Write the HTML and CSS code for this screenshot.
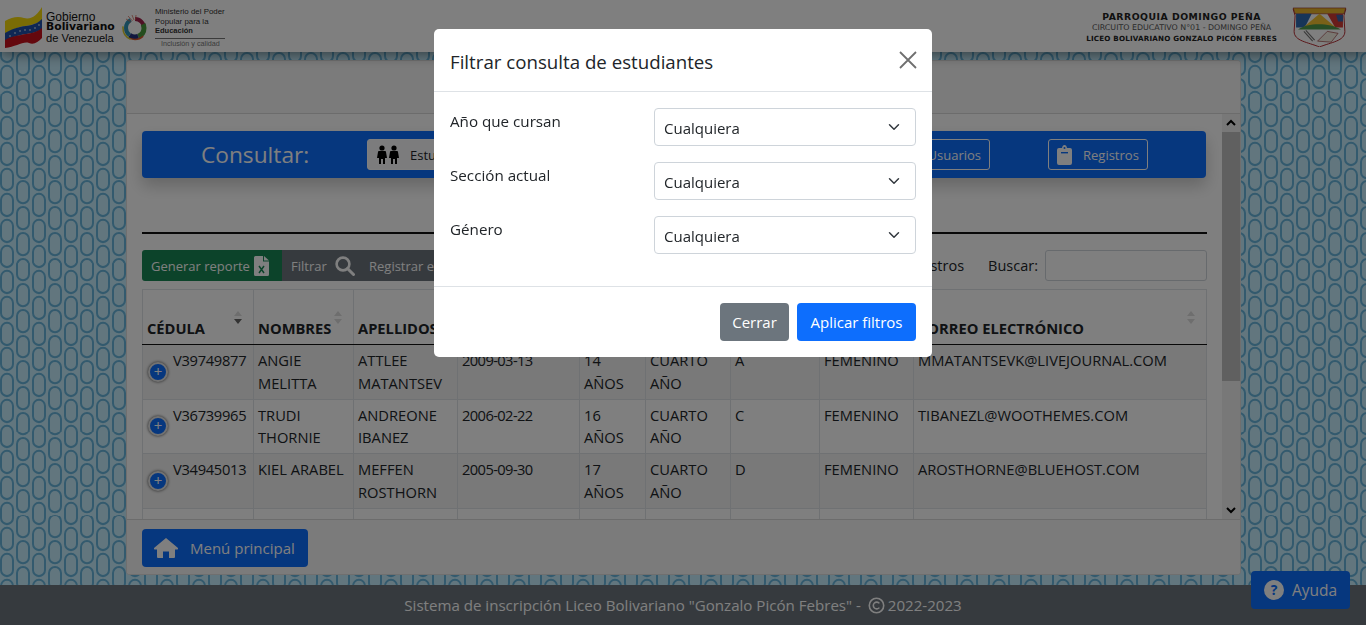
FILE: index.html
```html
<!DOCTYPE html>
<html lang="es">
<head>
    <meta charset="UTF-8">
    <meta name="viewport" content="width=device-width, initial-scale=1.0">
    <title>Consultar estudiantes</title>
    <link rel="stylesheet" href="styles.css">
</head>
<body>

    <header class="top-header">
        <div class="brand">
            <svg class="flag" viewBox="0 0 40 42" width="40" height="42">
                <path d="M1 15 C8 11 14 10 20 12 C28 14 34 8 38 1 L38 14 C30 20 24 19 16 21 C10 23 5 25 1 28 Z" fill="#f5d90a"/>
                <path d="M1 27 C6 24 11 22 16 21 C24 19 31 20 38 13 L38 23 C31 28 24 27 17 29 C10 31 5 32 1 35 Z" fill="#1f4fa8"/>
                <path d="M1 34 C6 31 11 30 17 29 C24 27 31 28 38 22 L38 32 C34 36 30 39 25 37 C19 35 12 41 1 42 Z" fill="#c8101c"/>
                <g fill="#fff">
                    <circle cx="6" cy="30" r=".8"/><circle cx="11" cy="27" r=".8"/><circle cx="16" cy="25" r=".8"/>
                    <circle cx="21" cy="24" r=".8"/><circle cx="26" cy="24" r=".8"/><circle cx="31" cy="22" r=".8"/><circle cx="35" cy="19" r=".8"/>
                </g>
            </svg>
            <div class="brand-gob">
                <span>Gobierno</span>
                <strong>Bolivariano</strong>
                <span class="brand-gob-last">de Venezuela</span>
            </div>
            <svg class="ring" viewBox="0 0 28 28" width="28" height="28">
                <g fill="none" transform="rotate(-90 14 14)">
                    <circle cx="14" cy="14" r="9" stroke="#a0224a" stroke-width="4" stroke-dasharray="14 60" pathLength="56.5"/>
                    <circle cx="14" cy="14" r="9" stroke="#4a9a3c" stroke-width="5" stroke-dasharray="15 60" stroke-dashoffset="-10" pathLength="56.5"/>
                    <circle cx="14" cy="14" r="9" stroke="#24307f" stroke-width="5" stroke-dasharray="9 60" stroke-dashoffset="-25" pathLength="56.5"/>
                    <circle cx="14" cy="14" r="11.5" stroke="#d8572a" stroke-width="1.5" stroke-dasharray="14 80" stroke-dashoffset="-27" pathLength="72"/>
                    <circle cx="14" cy="14" r="9" stroke="#2f93b5" stroke-width="4" stroke-dasharray="18 60" stroke-dashoffset="-34" pathLength="56.5"/>
                    <circle cx="14" cy="14" r="12" stroke="#d6c92c" stroke-width="1.6" stroke-dasharray="16 80" stroke-dashoffset="-42" pathLength="75"/>
                </g>
                <path d="M13 6 L11 1 M14.5 6 L15 1 M11.5 7 L7 2 M10 8 L5 5" stroke="#d0604a" stroke-width=".7"/>
            </svg>
            <div class="brand-min">
                <span>Ministerio del Poder</span>
                <span>Popular para la</span>
                <strong>Educación</strong>
                <em>Inclusión y calidad</em>
            </div>
        </div>
        <div class="school">
            <div class="school-text">
                <strong class="school-name">PARROQUIA DOMINGO PEÑA</strong>
                <span class="school-circuit">CIRCUITO EDUCATIVO N°01 - DOMINGO PEÑA</span>
                <strong class="school-liceo">LICEO BOLIVARIANO GONZALO PICÓN FEBRES</strong>
            </div>
            <svg class="crest" viewBox="0 0 56 42" width="55" height="41">
                <path d="M3 10 L1 3 L55 3 L53 10 L54 26 C54 36 40 37 28 42 C16 37 2 36 2 26 Z" fill="#fff" stroke="#b3262c" stroke-width="1"/>
                <path d="M1 2 H55 L53 8 H3 Z" fill="#e8b52a" stroke="#8a1f1f" stroke-width=".6"/>
                <path d="M4 8 H20 L13 22 H4 Z" fill="#2f6bb0"/>
                <path d="M36 8 H52 V22 H44 Z" fill="#d23a34"/>
                <path d="M45 9 L52 9 L52 16 L47 16 Z" fill="#3a62a8"/>
                <path d="M10 23 L28 8 L46 23 Z" fill="#f2c230"/>
                <path d="M6 24 C16 17 38 17 50 24 Z" fill="#4e9a4a"/>
                <path d="M12 26 L21 36 M14 25 L23 35" stroke="#777" stroke-width="1.2"/>
                <path d="M26 36 L36 26 L47 28 L40 37 Z" fill="#f4f0e4" stroke="#8a1f1f" stroke-width=".6"/>
            </svg>
        </div>
    </header>

    <main class="page">
        <section class="card">
            <div class="card-head"></div>
            <div class="card-main">
                <div class="card-scroll">
                    <div class="query-bar">
                        <span class="query-title">Consultar:</span>
                        <nav class="query-nav">
                            <a class="nav-btn nav-btn-active nav-btn-first">
                                <svg viewBox="0 0 24 20" width="24" height="20">
                                    <g fill="#000">
                                        <circle cx="6" cy="3" r="2.6"/><path d="M2 7 Q2 6 3 6 H9 Q10 6 10 7 L11 13 H9 V19 H7 V14 H5 V19 H3 V13 H1 Z"/>
                                        <circle cx="18" cy="3" r="2.6"/><path d="M14 7 Q14 6 15 6 H21 Q22 6 22 7 L23 13 H21 V19 H19 V14 H17 V19 H15 V13 H13 Z"/>
                                    </g>
                                </svg>
                                <span>Estudiantes</span>
                            </a>
                            <a class="nav-btn nav-btn-hidden-a"><span>Representantes</span></a>
                            <a class="nav-btn nav-btn-hidden-b"><span>Personal</span></a>
                            <a class="nav-btn nav-btn-users"><span>Usuarios</span></a>
                            <a class="nav-btn nav-btn-log">
                                <svg viewBox="0 0 15 20" width="15" height="20">
                                    <path fill="#fff" d="M2 3 H5 Q5.5 0 7.5 0 Q9.500 0 10 3 H13 Q15 3 15 5 V18 Q15 20 13 20 H2 Q0 20 0 18 V5 Q0 3 2 3 Z"/>
                                    <circle cx="7.500" cy="3" r="1" fill="#0d6efd"/>
                                    <rect x="4" y="7" width="7" height="1.400" fill="#0d6efd"/>
                                </svg>
                                <span>Registros</span>
                            </a>
                        </nav>
                    </div>

                    <hr class="divider">

                    <div class="table-tools">
                        <div class="btn-group">
                            <a class="tool-btn tool-green">
                                <span>Generar reporte</span>
                                <svg viewBox="0 0 15 20" width="15" height="20">
                                    <path fill="#fff" d="M1.500 0 H9 V5.500 H15 V18.500 Q15 20 13.500 20 H1.500 Q0 20 0 18.500 V1.500 Q0 0 1.500 0 Z M10 0 L15 4.500 H10 Z"/>
                                    <path d="M5 10 L10 17 M10 10 L5 17" stroke="#198754" stroke-width="1.500"/>
                                </svg>
                            </a>
                            <a class="tool-btn tool-gray">
                                <span>Filtrar</span>
                                <svg viewBox="0 0 20 20" width="20" height="20">
                                    <circle cx="8" cy="8" r="6.400" fill="none" stroke="#fff" stroke-width="2.600"/>
                                    <path d="M12.500 12.500 L18.500 18.500" stroke="#fff" stroke-width="3" stroke-linecap="round"/>
                                </svg>
                            </a>
                            <a class="tool-btn tool-gray tool-register"><span>Registrar estudiante</span></a>
                        </div>
                        <div class="tools-right">
                            <span>Mostrar 10 registros</span>
                            <label class="search-label">Buscar:</label>
                            <input class="search-input" type="search">
                        </div>
                    </div>

                    <table class="students">
                        <colgroup>
                            <col class="col-id"><col class="col-name"><col class="col-last"><col class="col-birth"><col class="col-age">
                            <col class="col-year"><col class="col-section"><col class="col-gender"><col>
                        </colgroup>
                        <thead>
                            <tr>
                                <th class="sorted">CÉDULA</th>
                                <th>NOMBRES</th>
                                <th>APELLIDOS</th>
                                <th>FECHA DE NACIMIENTO</th>
                                <th>EDAD</th>
                                <th>AÑO</th>
                                <th>SECCIÓN</th>
                                <th>GÉNERO</th>
                                <th>CORREO ELECTRÓNICO</th>
                            </tr>
                        </thead>
                        <tbody>
                            <tr>
                                <td class="id-cell"><span class="expand">+</span>V39749877</td>
                                <td>ANGIE MELITTA</td>
                                <td>ATTLEE MATANTSEV</td>
                                <td class="date-cell">2009-03-13</td>
                                <td>14 AÑOS</td>
                                <td>CUARTO AÑO</td>
                                <td>A</td>
                                <td>FEMENINO</td>
                                <td>MMATANTSEVK@LIVEJOURNAL.COM</td>
                            </tr>
                            <tr>
                                <td class="id-cell"><span class="expand">+</span>V36739965</td>
                                <td>TRUDI THORNIE</td>
                                <td>ANDREONE IBANEZ</td>
                                <td class="date-cell">2006-02-22</td>
                                <td>16 AÑOS</td>
                                <td>CUARTO AÑO</td>
                                <td>C</td>
                                <td>FEMENINO</td>
                                <td>TIBANEZL@WOOTHEMES.COM</td>
                            </tr>
                            <tr>
                                <td class="id-cell"><span class="expand">+</span>V34945013</td>
                                <td>KIEL ARABEL</td>
                                <td>MEFFEN ROSTHORN</td>
                                <td class="date-cell">2005-09-30</td>
                                <td>17 AÑOS</td>
                                <td>CUARTO AÑO</td>
                                <td>D</td>
                                <td>FEMENINO</td>
                                <td>AROSTHORNE@BLUEHOST.COM</td>
                            </tr>
                            <tr>
                                <td class="id-cell"><span class="expand">+</span>V14806536</td>
                                <td>WALDEMAR PAUL</td>
                                <td>CRIVEY PAULA</td>
                                <td class="date-cell">2004-07-30</td>
                                <td>18 AÑOS</td>
                                <td>CUARTO AÑO</td>
                                <td>E</td>
                                <td>MASCULINO</td>
                                <td>IPAULMAIE@TUEBBA.COM</td>
                            </tr>
                        </tbody>
                    </table>
                </div>
                <div class="fake-scrollbar">
                    <svg class="scroll-arrow" viewBox="0 0 18 18" width="18" height="18"><path d="M5 11 L9 7 L13 11" fill="none" stroke="#000" stroke-width="2"/></svg>
                    <div class="scroll-track"><div class="scroll-thumb"></div></div>
                    <svg class="scroll-arrow" viewBox="0 0 18 18" width="18" height="18"><path d="M5 7 L9 11 L13 7" fill="none" stroke="#000" stroke-width="2"/></svg>
                </div>
            </div>
            <div class="card-foot">
                <a class="home-btn">
                    <svg viewBox="0 0 24 20" width="24" height="20">
                        <path fill="#fff" d="M12 0 L24 10 Q24.500 11 23.500 11.500 L21 11.500 V19 Q21 20 20 20 H15 V13.500 H9 V20 H4 Q3 20 3 19 V11.500 H.5 Q-.5 11 0 10 Z"/>
                    </svg>
                    <span>Menú principal</span>
                </a>
            </div>
        </section>
    </main>

    <footer class="bottom-footer">
        <span>Sistema de inscripción Liceo Bolivariano "Gonzalo Picón Febres" - </span>
        <svg viewBox="0 0 16 16" width="17" height="17">
            <circle cx="8" cy="8" r="6.800" fill="none" stroke="#fff" stroke-width="1.500"/>
            <path d="M10.700 6 A3.200 3.200 0 1 0 10.700 10" fill="none" stroke="#fff" stroke-width="1.500"/>
        </svg>
        <span>2022-2023</span>
    </footer>

    <a class="help-btn"><span class="help-icon">?</span><span>Ayuda</span></a>

    <div class="backdrop"></div>

    <div class="modal">
        <div class="modal-head">
            <h5 class="modal-title">Filtrar consulta de estudiantes</h5>
            <svg class="modal-close" viewBox="0 0 18 18" width="18" height="18">
                <path d="M1 1 L17 17 M17 1 L1 17" stroke="#6f6f6f" stroke-width="1.800"/>
            </svg>
        </div>
        <div class="modal-body">
            <div class="form-row">
                <label class="form-label">Año que cursan</label>
                <select class="form-select"><option>Cualquiera</option></select>
            </div>
            <div class="form-row">
                <label class="form-label">Sección actual</label>
                <select class="form-select"><option>Cualquiera</option></select>
            </div>
            <div class="form-row">
                <label class="form-label">Género</label>
                <select class="form-select"><option>Cualquiera</option></select>
            </div>
        </div>
        <div class="modal-foot">
            <button class="btn btn-gray">Cerrar</button>
            <button class="btn btn-blue">Aplicar filtros</button>
        </div>
    </div>

</body>
</html>
```

FILE: styles.css
```css
* {
    box-sizing: border-box;
}

body {
    font-family: "Open Sans", "Noto Sans", sans-serif;
    margin: 0;
    height: 100vh;
    overflow: hidden;
    display: flex;
    flex-direction: column;
    color: #212529;
    background: #fff;
}

/* top header */
.top-header {
    height: 52px;
    flex: none;
    background: #fff;
    display: flex;
    justify-content: space-between;
    align-items: center;
    padding: 0 19px 0 4px;
    box-shadow: 0 3px 12px rgba(0, 0, 0, 0.45);
    position: relative;
}

.brand {
    display: flex;
    align-items: center;
}

.flag {
    margin-top: 1px;
}

.brand-gob {
    display: flex;
    flex-direction: column;
    margin-left: 2px;
    line-height: 10.5px;
    color: #111;
    font-family: "Liberation Sans", sans-serif;
    margin-top: 3px;
    width: 75px;
}

.brand-gob span {
    font-size: 12px;
}

.brand-gob strong {
    font-family: "DejaVu Sans", sans-serif;
    font-size: 10.800px;
}

.brand-gob .brand-gob-last {
    font-size: 11.200px;
}

.ring {
    margin-top: 4px;
}

.brand-min {
    display: flex;
    flex-direction: column;
    margin-left: 6px;
    font-size: 7.900px;
    line-height: 9.5px;
    color: #333;
    margin-top: 3px;
    width: 70px;
    white-space: nowrap;
    font-family: "Liberation Sans", sans-serif;
}

.brand-min strong {
    font-size: 7.500px;
}

.brand-min em {
    font-style: normal;
    font-size: 7.200px;
    color: #777;
    border-top: 1px solid #777;
    margin-top: 2px;
    padding-left: 6px;
}

.school {
    display: flex;
    align-items: center;
}

.school-text {
    display: flex;
    flex-direction: column;
    align-items: center;
    font-family: "DejaVu Sans", sans-serif;
    line-height: 11px;
    margin-right: 15px;
    padding-top: 2px;
}

.school-name {
    font-size: 9.300px;
    letter-spacing: 0.5px;
    color: #222;
}

.school-circuit {
    font-size: 7.900px;
    color: #555;
}

.school-liceo {
    font-size: 7.150px;
    letter-spacing: 0.2px;
    color: #222;
}

/* patterned page */
.page {
    flex: 1;
    min-height: 0;
    padding: 8px 125px 10px 126px;
    background-color: #c4ecfc;
    background-image: url("data:image/svg+xml,%3Csvg xmlns='http://www.w3.org/2000/svg' width='32' height='51.4'%3E%3Cg fill='none' stroke='%2366b4dc' stroke-width='2'%3E%3Crect x='17' y='1' width='12' height='22' rx='6'/%3E%3Crect x='17' y='26.700' width='12' height='22' rx='6'/%3E%3Crect x='1' y='13.700' width='12' height='22' rx='6'/%3E%3Crect x='1' y='39.400' width='12' height='22' rx='6'/%3E%3Crect x='1' y='-12' width='12' height='22' rx='6'/%3E%3C/g%3E%3C/svg%3E");
}

.card {
    height: 100%;
    background: #fff;
    border: 1px solid rgba(0, 0, 0, 0.125);
    border-radius: 4px;
    display: flex;
    flex-direction: column;
    overflow: hidden;
}

.card-head {
    height: 53px;
    flex: none;
    background: #f7f7f7;
    border-bottom: 1px solid #d9d9d9;
}

.card-main {
    flex: 1;
    min-height: 0;
    display: flex;
}

.card-scroll {
    flex: 1;
    min-width: 0;
    padding: 17px 15px 0 15px;
    overflow: hidden;
}

.fake-scrollbar {
    width: 18px;
    flex: none;
    background: #f1f1f1;
    display: flex;
    flex-direction: column;
}

.scroll-arrow {
    flex: none;
}

.scroll-track {
    flex: 1;
}

.scroll-thumb {
    height: 249px;
    background: #c1c1c1;
}

/* blue bar */
.query-bar {
    height: 47px;
    background: #0d6efd;
    border-radius: 4px;
    display: flex;
    align-items: center;
    box-shadow: 0 8px 16px rgba(0, 0, 0, 0.2);
    margin-right: 1px;
}

.query-title {
    width: 166px;
    margin-left: 59px;
    color: #fff;
    font-size: 22.700px;
    flex: none;
}

.query-nav {
    flex: 1;
    display: flex;
    justify-content: space-between;
    margin-right: 58px;
}

.nav-btn {
    height: 31px;
    border: 1px solid #fff;
    border-radius: 3px;
    color: #fff;
    display: flex;
    align-items: center;
    font-size: 13px;
    padding: 0 8px;
    gap: 11px;
}

.nav-btn svg {
    flex: none;
}

.nav-btn-active {
    background: #f8f9fa;
    color: #212529;
}

.nav-btn-first {
    width: 130px;
    gap: 10px;
}

.nav-btn-hidden-a {
    width: 133px;
}

.nav-btn-hidden-b {
    width: 92px;
}

.nav-btn-users {
    width: 94px;
    justify-content: flex-end;
}

.nav-btn-log {
    width: 100px;
}

.divider {
    border: 0;
    height: 2px;
    background: #111;
    margin: 54px 0 16px;
}

/* toolbar */
.table-tools {
    height: 31px;
    display: flex;
    justify-content: space-between;
    align-items: center;
    font-size: 14.500px;
}

.btn-group {
    display: flex;
    height: 31px;
}

.tool-btn {
    color: #fff;
    display: flex;
    align-items: center;
    font-size: 13px;
    padding: 0 0 0 9px;
    gap: 4px;
    white-space: nowrap;
    overflow: hidden;
}

.tool-btn svg {
    flex: none;
}

.tool-green {
    background: #198754;
    width: 140px;
    border-radius: 3px 0 0 3px;
}

.tool-gray {
    background: #6c757d;
    width: 78px;
    gap: 8px;
}

.tool-register {
    width: 200px;
    border-radius: 0 3px 3px 0;
}

.tools-right {
    display: flex;
    align-items: center;
}

.search-label {
    margin-left: 24px;
    margin-right: 7px;
}

.search-input {
    width: 162px;
    height: 31px;
    border: 1px solid #ced4da;
    border-radius: 3px;
    background: #fff;
}

/* table */
.students {
    margin-top: 8px;
    width: 1065px;
    table-layout: fixed;
    border-collapse: collapse;
    font-size: 14.700px;
    line-height: 22.5px;
}

.col-id { width: 111px; }
.col-name { width: 100px; }
.col-last { width: 104px; }
.col-birth { width: 122px; }
.col-age { width: 66px; }
.col-year { width: 85px; }
.col-section { width: 89px; }
.col-gender { width: 94px; }

.students th,
.students td {
    border: 1px solid #dee2e6;
    padding: 4px 4px;
    text-align: left;
    vertical-align: top;
}

.students th {
    height: 55px;
    vertical-align: bottom;
    font-size: 14.700px;
    padding-bottom: 5px;
    white-space: nowrap;
    overflow: hidden;
    position: relative;
    border-bottom: 1px solid #111;
}

.students th::before,
.students th::after {
    content: "";
    position: absolute;
    right: 11px;
    border-left: 4px solid transparent;
    border-right: 4px solid transparent;
}

.students th::before {
    top: 21px;
    border-bottom: 5px solid #dcdcdc;
}

.students th::after {
    top: 29px;
    border-top: 5px solid #dcdcdc;
}

.students th.sorted::after {
    border-top-color: #666;
}

.students tbody tr {
    height: 54.600px;
}

.students tbody tr:nth-child(odd) {
    background: rgba(0, 0, 0, 0.05);
}

.id-cell {
    position: relative;
    padding-left: 30px !important;
    letter-spacing: -0.3px;
}

.date-cell {
    letter-spacing: -0.6px;
}

.expand {
    position: absolute;
    left: 5px;
    top: 50%;
    margin-top: -10px;
    width: 20px;
    height: 20px;
    border-radius: 50%;
    background: #0d6efd;
    border: 2px solid #e4e4e4;
    box-shadow: 0 0 3px #444;
    color: #fff;
    font-size: 15px;
    line-height: 14px;
    text-align: center;
}

/* card footer */
.card-foot {
    height: 55px;
    flex: none;
    background: #f7f7f7;
    border-top: 1px solid #d9d9d9;
    padding: 9px 15px;
}

.home-btn {
    display: flex;
    align-items: center;
    width: 166px;
    height: 38px;
    background: #0d6efd;
    color: #fff;
    border-radius: 4px;
    padding-left: 12px;
    gap: 12px;
    font-size: 15px;
}

/* bottom footer */
.bottom-footer {
    height: 40px;
    flex: none;
    background: #6c757d;
    color: #fff;
    display: flex;
    align-items: center;
    justify-content: center;
    gap: 3px;
    font-size: 15.100px;
    white-space: pre;
}

.help-btn {
    position: fixed;
    left: 1251px;
    top: 571px;
    width: 99px;
    height: 38px;
    background: #0d6efd;
    color: #fff;
    border-radius: 4px;
    display: flex;
    align-items: center;
    gap: 8px;
    padding-left: 13px;
    font-size: 15.500px;
}

.help-icon {
    width: 20px;
    height: 20px;
    border-radius: 50%;
    background: #fff;
    color: #0d6efd;
    font-weight: 700;
    font-size: 14px;
    line-height: 20px;
    text-align: center;
}

/* modal */
.backdrop {
    position: fixed;
    inset: 0;
    background: rgba(0, 0, 0, 0.5);
}

.modal {
    position: fixed;
    left: 434px;
    top: 29px;
    width: 498px;
    height: 328px;
    background: #fff;
    border-radius: 5px;
    display: flex;
    flex-direction: column;
}

.modal-head {
    height: 63px;
    flex: none;
    display: flex;
    justify-content: space-between;
    align-items: center;
    padding: 0 15px 0 16px;
    border-bottom: 1px solid #dee2e6;
}

.modal-title {
    margin: 2px 0 0;
    font-size: 18.700px;
    font-weight: 400;
}

.modal-body {
    flex: 1;
    padding: 16px;
    display: flex;
    flex-direction: column;
    gap: 16px;
}

.form-row {
    display: grid;
    grid-template-columns: 204px 1fr;
    height: 38px;
}

.form-label {
    font-size: 15.200px;
    line-height: 27px;
}

.form-select {
    appearance: none;
    height: 38px;
    border: 1px solid #ced4da;
    border-radius: 4px;
    padding: 2px 9px 0;
    font-family: inherit;
    font-size: 15px;
    color: #212529;
    background-color: #fff;
    background-image: url("data:image/svg+xml,%3Csvg xmlns='http://www.w3.org/2000/svg' viewBox='0 0 16 16'%3E%3Cpath fill='none' stroke='%23343a40' stroke-linecap='round' stroke-linejoin='round' stroke-width='2' d='M2 5l6 6 6-6'/%3E%3C/svg%3E");
    background-repeat: no-repeat;
    background-position: right 15px center;
    background-size: 12px 12px;
}

.modal-foot {
    height: 71px;
    flex: none;
    border-top: 1px solid #dee2e6;
    display: flex;
    justify-content: flex-end;
    align-items: flex-start;
    gap: 8px;
    padding: 16px;
}

.btn {
    height: 38px;
    border: 0;
    border-radius: 4px;
    color: #fff;
    font-family: inherit;
    font-size: 15px;
}

.btn-gray {
    width: 69px;
    background: #6c757d;
}

.btn-blue {
    width: 119px;
    background: #0d6efd;
}
```
